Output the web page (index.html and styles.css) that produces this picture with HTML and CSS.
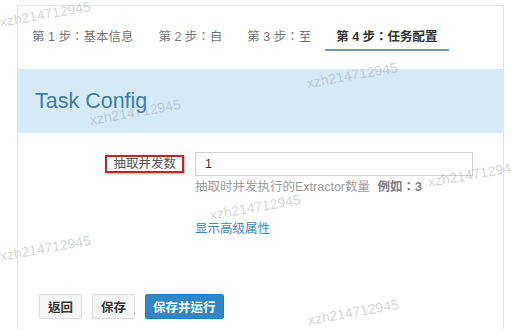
FILE: index.html
```html
<!DOCTYPE html>
<html lang="zh-CN">

<head>
    <meta charset="UTF-8">
    <meta name="viewport" content="width=device-width, initial-scale=1.0">
    <title>任务配置</title>
    <link rel="stylesheet" href="styles.css">
</head>

<body>

    <div class="panel">
        <div class="steps">
            <div class="step">第 1 步：基本信息</div>
            <div class="step">第 2 步：自</div>
            <div class="step">第 3 步：至</div>
            <div class="step active">第 4 步：任务配置</div>
        </div>

        <div class="panel-title">Task Config</div>

        <div class="form">
            <div class="form-row">
                <div class="form-label"><span class="mark">抽取并发数</span></div>
                <div class="form-field">
                    <input class="text-input" type="text" value="1">
                    <div class="help">抽取时并发执行的Extractor数量 <b>例如：3</b></div>
                    <a class="more-link" href="#">显示高级属性</a>
                </div>
            </div>
        </div>

        <div class="actions">
            <button class="btn">返回</button>
            <button class="btn">保存</button>
            <button class="btn btn-primary">保存并运行</button>
        </div>
    </div>

    <div class="watermarks">
        <span class="wm" style="left: 0; top: 14px;">xzh214712945</span>
        <span class="wm" style="left: 90px; top: 112px;">xzh214712945</span>
        <span class="wm" style="left: 307px; top: 75px;">xzh214712945</span>
        <span class="wm" style="left: 428px; top: 174px;">xzh214712945</span>
        <span class="wm" style="left: 210px; top: 207px;">xzh214712945</span>
        <span class="wm" style="left: 0; top: 248px;">xzh214712945</span>
        <span class="wm" style="left: 308px; top: 312px;">xzh214712945</span>
    </div>

</body>

</html>
```

FILE: styles.css
```css
/* CSS styles */

body {
    font-family: "Liberation Sans", "Noto Sans CJK TC", sans-serif;
    font-feature-settings: "locl" 0;
    font-size: 12.5px;
    color: #555;
    margin: 0;
    padding: 0;
    background: #fff;
    overflow: hidden;
}

.panel {
    box-sizing: border-box;
    margin: 5px 0 0 17px;
    width: 487px;
    height: 324px;
    border: 1px solid #e4e4e4;
    border-bottom: none;
}

.steps {
    display: flex;
    gap: 3px;
    padding: 22px 0 0 3px;
}

.step {
    padding: 0 11px 3px;
    line-height: 18px;
    color: #777;
    border-bottom: 2px solid transparent;
}

.step.active {
    color: #333;
    font-weight: bold;
    border-bottom-color: #6d9cb6;
}

.panel-title {
    margin-top: 18px;
    height: 64px;
    display: flex;
    align-items: center;
    padding-left: 17px;
    background: #d6eaf6;
    color: #3c7eab;
    font-size: 21.5px;
}

.form {
    padding-top: 19px;
}

.form-row {
    display: flex;
    gap: 11px;
}

.form-label {
    width: 166px;
    display: flex;
    justify-content: flex-end;
    align-items: flex-start;
    padding-top: 3px;
}

.mark {
    border: 2px solid #c3262c;
    padding: 0 6px;
    line-height: 14px;
    color: #555;
    box-shadow: 1px 1px 2px rgba(0, 0, 0, 0.3);
}

.form-field {
    display: flex;
    flex-direction: column;
    align-items: flex-start;
}

.text-input {
    box-sizing: border-box;
    width: 278px;
    height: 24px;
    border: 1px solid #d2d2d2;
    padding: 0 9px;
    font: inherit;
    color: #333;
    outline: none;
}

.help {
    margin-top: 2px;
    line-height: 18px;
    color: #a0a0a0;
}

.help b {
    color: #808080;
    margin-left: 4px;
}

.more-link {
    margin-top: 24px;
    line-height: 18px;
    color: #3e88c2;
    text-decoration: none;
}

.actions {
    display: flex;
    gap: 10px;
    padding: 56px 0 0 21px;
}

.btn {
    height: 25px;
    padding: 0 8px;
    font: inherit;
    font-weight: bold;
    color: #333;
    background: #f6f6f6;
    border: 1px solid #dcdcdc;
    border-radius: 2px;
}

.btn-primary {
    padding: 0 7px;
    color: #fff;
    background: #2f87c7;
    border-color: #2b7dba;
}

.watermarks {
    position: absolute;
    left: 0;
    top: 0;
    width: 511px;
    height: 329px;
    pointer-events: none;
    overflow: hidden;
}

.wm {
    position: absolute;
    font-size: 14px;
    line-height: 16px;
    color: rgba(150, 150, 150, 0.4);
    white-space: nowrap;
    transform: rotate(-10deg);
    transform-origin: left center;
}
```
